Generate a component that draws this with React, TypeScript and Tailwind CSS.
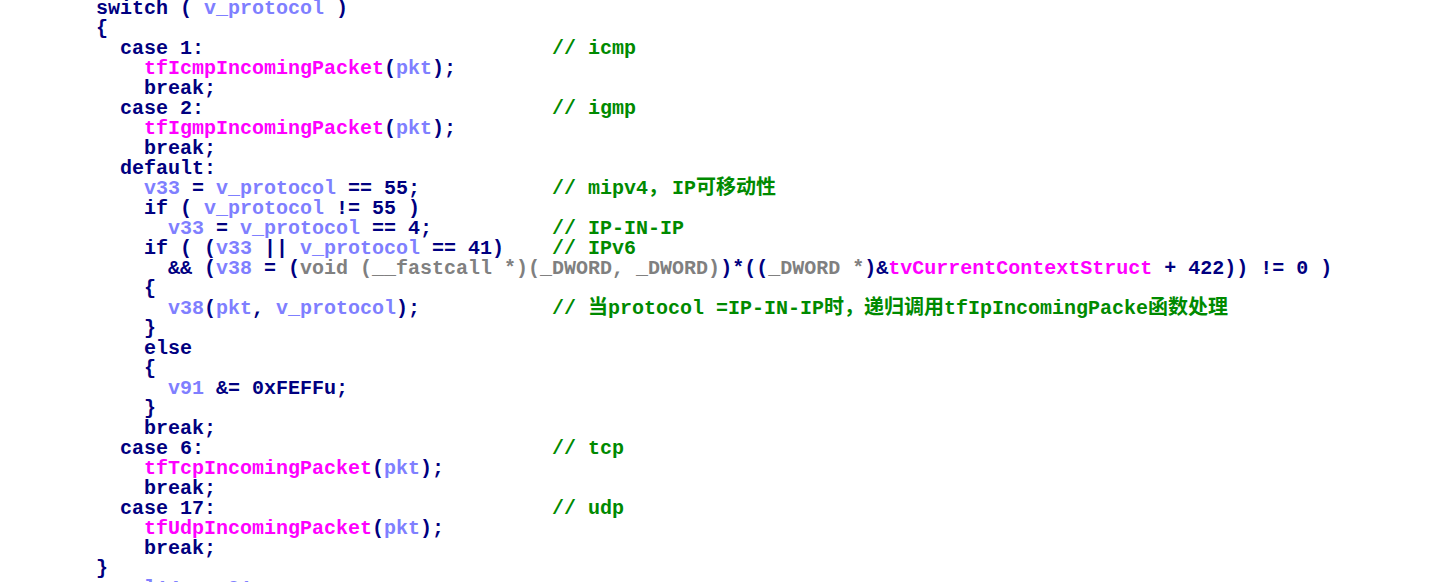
import React from "react";

type Tok = [string, string];
const K = "text-[#000080]";
const V = "text-[#7f7fff]";
const F = "text-[#ff00ff]";
const T = "text-[#808080]";
const C = "text-[#008a00]";

const k = (s: string): Tok => [s, K];
const v = (s: string): Tok => [s, V];
const f = (s: string): Tok => [s, F];
const t = (s: string): Tok => [s, T];

type Line = { ind: 8 | 10 | 12 | 14; code: Tok[]; comment?: React.ReactNode };

const indentClass: Record<number, string> = {
  8: "pl-[96px]",
  10: "pl-[120px]",
  12: "pl-[144px]",
  14: "pl-[168px]",
};

const lines: Line[] = [
  { ind: 8, code: [k("switch ( "), v("v_protocol"), k(" )")] },
  { ind: 8, code: [k("{")] },
  { ind: 10, code: [k("case 1:")], comment: "// icmp" },
  { ind: 12, code: [f("tfIcmpIncomingPacket"), k("("), v("pkt"), k(");")] },
  { ind: 12, code: [k("break;")] },
  { ind: 10, code: [k("case 2:")], comment: "// igmp" },
  { ind: 12, code: [f("tfIgmpIncomingPacket"), k("("), v("pkt"), k(");")] },
  { ind: 12, code: [k("break;")] },
  { ind: 10, code: [k("default:")] },
  {
    ind: 12,
    code: [v("v33"), k(" = "), v("v_protocol"), k(" == 55;")],
    comment: (
      <>
        // mipv4<span className="inline-block w-[24px]">，</span>IP可移动性
      </>
    ),
  },
  { ind: 12, code: [k("if ( "), v("v_protocol"), k(" != 55 )")] },
  { ind: 14, code: [v("v33"), k(" = "), v("v_protocol"), k(" == 4;")], comment: "// IP-IN-IP" },
  {
    ind: 12,
    code: [k("if ( ("), v("v33"), k(" || "), v("v_protocol"), k(" == 41)")],
    comment: "// IPv6",
  },
  {
    ind: 14,
    code: [
      k("&& ("),
      v("v38"),
      k(" = ("),
      t("void (__fastcall *)(_DWORD, _DWORD)"),
      k(")*(("),
      t("_DWORD *"),
      k(")&"),
      f("tvCurrentContextStruct"),
      k(" + 422)) != 0 )"),
    ],
  },
  { ind: 12, code: [k("{")] },
  {
    ind: 14,
    code: [v("v38"), k("("), v("pkt"), k(", "), v("v_protocol"), k(");")],
    comment: "// 当protocol =IP-IN-IP时，递归调用tfIpIncomingPacke函数处理",
  },
  { ind: 12, code: [k("}")] },
  { ind: 12, code: [k("else")] },
  { ind: 12, code: [k("{")] },
  { ind: 14, code: [v("v91"), k(" &= 0xFEFFu;")] },
  { ind: 12, code: [k("}")] },
  { ind: 12, code: [k("break;")] },
  { ind: 10, code: [k("case 6:")], comment: "// tcp" },
  { ind: 12, code: [f("tfTcpIncomingPacket"), k("("), v("pkt"), k(");")] },
  { ind: 12, code: [k("break;")] },
  { ind: 10, code: [k("case 17:")], comment: "// udp" },
  { ind: 12, code: [f("tfUdpIncomingPacket"), k("("), v("pkt"), k(");")] },
  { ind: 12, code: [k("break;")] },
  { ind: 8, code: [k("}")] },
  { ind: 12, code: [v("l14"), k(" = "), v("v91"), k(";")] },
];

export default function App() {
  return (
    <div
      className="w-[1438px] h-[582px] overflow-hidden bg-white"
      style={{ fontFamily: '"Liberation Mono", "Noto Sans CJK SC", monospace' }}
    >
      <div className="-mt-[1px] text-[20px] leading-[20px] font-bold whitespace-pre">
        {lines.map((ln, i) => (
          <div key={i} className="flex h-[20px]">
            <span className={`${indentClass[ln.ind]} ${ln.comment ? "w-[552px] shrink-0" : ""}`}>
              {ln.code.map(([s, cls], j) => (
                <span key={j} className={cls}>
                  {s}
                </span>
              ))}
            </span>
            {ln.comment && <span className={C}>{ln.comment}</span>}
          </div>
        ))}
      </div>
    </div>
  );
}
